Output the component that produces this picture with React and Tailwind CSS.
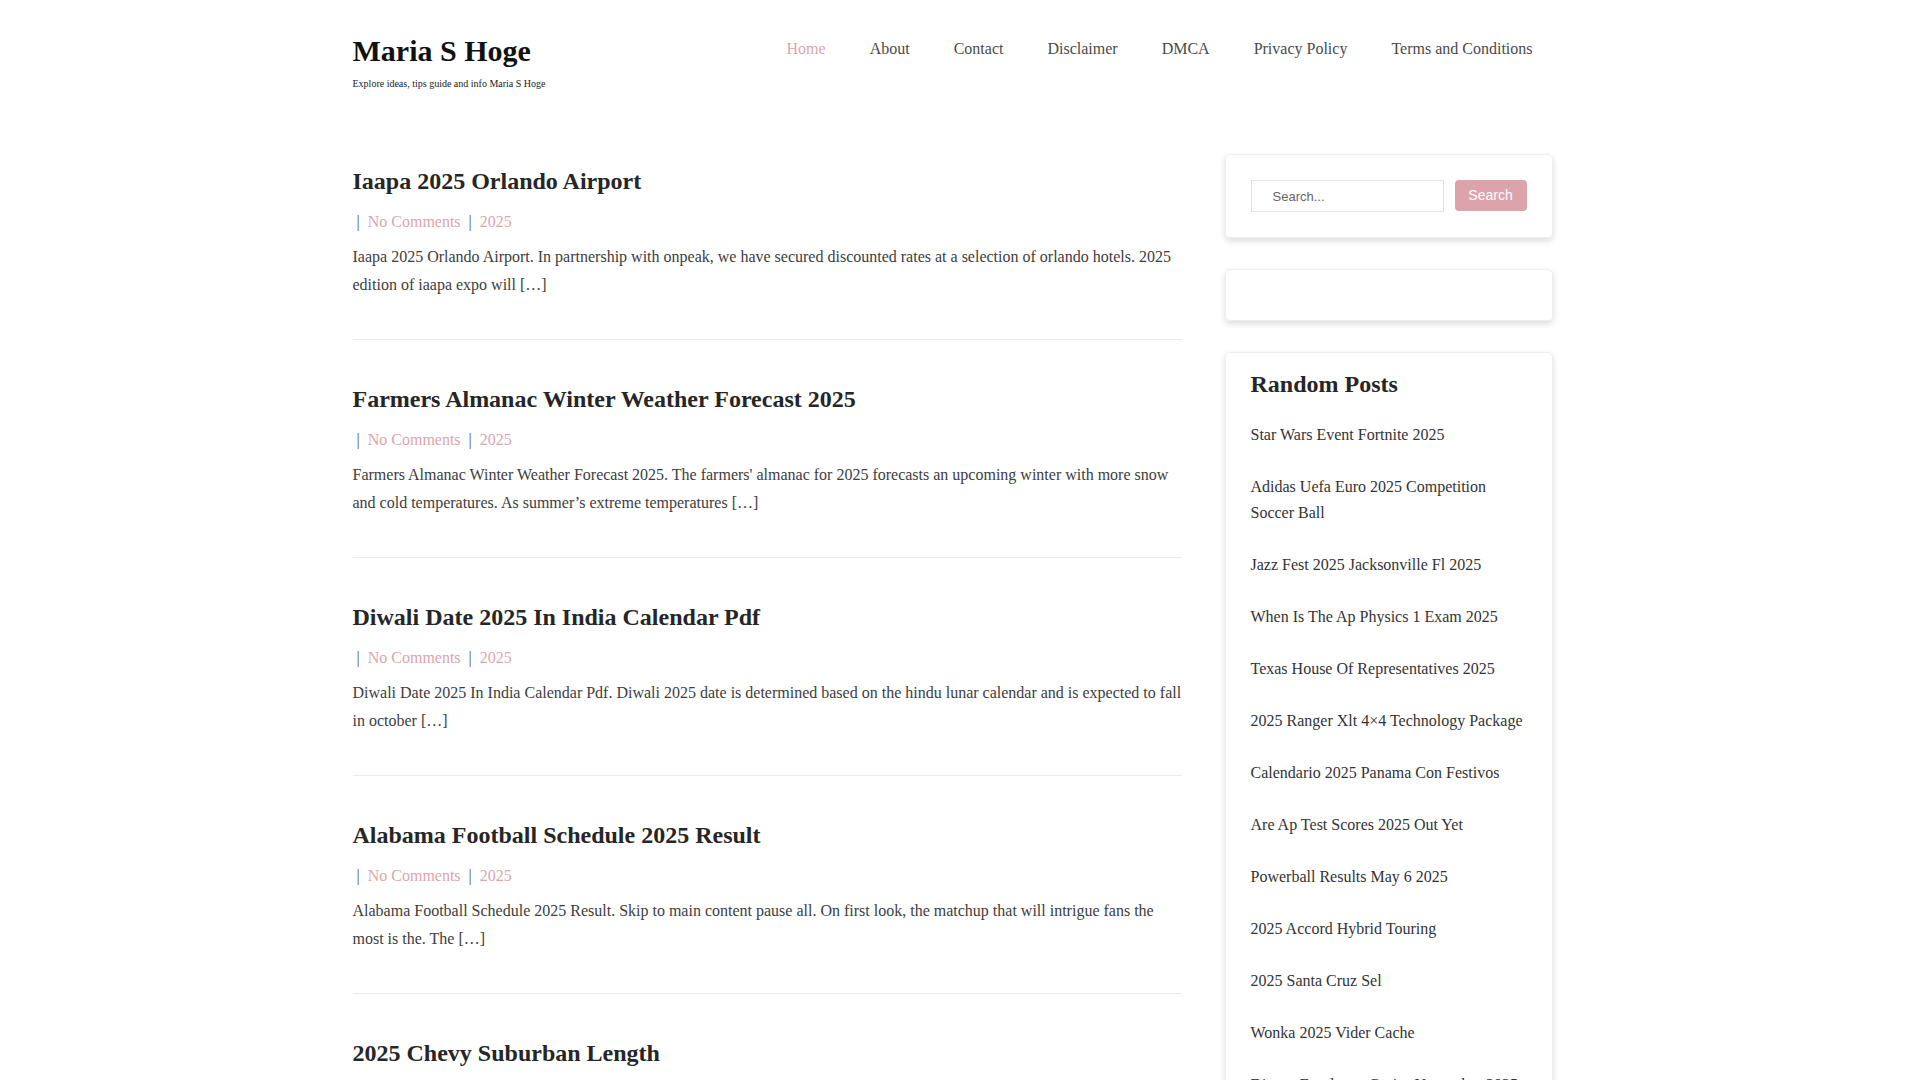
import React from "react";

const navItems = ["Home", "About", "Contact", "Disclaimer", "DMCA", "Privacy Policy", "Terms and Conditions"];

const posts = [
  {
    title: "Iaapa 2025 Orlando Airport",
    excerpt:
      "Iaapa 2025 Orlando Airport. In partnership with onpeak, we have secured discounted rates at a selection of orlando hotels. 2025 edition of iaapa expo will […]",
  },
  {
    title: "Farmers Almanac Winter Weather Forecast 2025",
    excerpt:
      "Farmers Almanac Winter Weather Forecast 2025. The farmers' almanac for 2025 forecasts an upcoming winter with more snow and cold temperatures. As summer’s extreme temperatures […]",
  },
  {
    title: "Diwali Date 2025 In India Calendar Pdf",
    excerpt:
      "Diwali Date 2025 In India Calendar Pdf. Diwali 2025 date is determined based on the hindu lunar calendar and is expected to fall in october […]",
  },
  {
    title: "Alabama Football Schedule 2025 Result",
    excerpt:
      "Alabama Football Schedule 2025 Result. Skip to main content pause all. On first look, the matchup that will intrigue fans the most is the. The […]",
  },
  {
    title: "2025 Chevy Suburban Length",
    excerpt:
      "2025 Chevy Suburban Length. The 2025 chevrolet suburban is one of the longest suvs on the market, offering plenty of room for passengers and cargo alike […]",
  },
];

const randomPosts = [
  "Star Wars Event Fortnite 2025",
  "Adidas Uefa Euro 2025 Competition Soccer Ball",
  "Jazz Fest 2025 Jacksonville Fl 2025",
  "When Is The Ap Physics 1 Exam 2025",
  "Texas House Of Representatives 2025",
  "2025 Ranger Xlt 4×4 Technology Package",
  "Calendario 2025 Panama Con Festivos",
  "Are Ap Test Scores 2025 Out Yet",
  "Powerball Results May 6 2025",
  "2025 Accord Hybrid Touring",
  "2025 Santa Cruz Sel",
  "Wonka 2025 Vider Cache",
  "Disney Employee Cruise November 2025",
];

export default function App() {
  return (
    <div className="min-h-screen bg-white pr-[15px] font-['Liberation_Serif',_'Times_New_Roman',_serif] text-[16px] text-[#333]">
      <div className="mx-auto w-[1200px]">
        <header className="flex h-[154px] items-start justify-between">
          <div className="pt-[33px]">
            <a href="#" className="block text-[30px] font-bold leading-[36px] text-[#111]">
              Maria S Hoge
            </a>
            <p className="mt-[7px] text-[10px] leading-[15px] text-[#222]">
              Explore ideas, tips guide and info Maria S Hoge
            </p>
          </div>
          <nav className="flex pt-[37px]">
            {navItems.map((item, i) => (
              <a
                key={item}
                href="#"
                className={
                  "px-[22px] text-[16px] leading-[24px] " +
                  (i === 0 ? "text-[#e0a4ae]" : "text-[#4a4a4a]") +
                  (i === navItems.length - 1 ? " pr-[20px]" : "")
                }
              >
                {item}
              </a>
            ))}
          </nav>
        </header>

        <div className="flex items-start justify-between">
          <main className="w-[829px] pt-[13px]">
            {posts.map((post, i) => (
              <article
                key={post.title}
                className={"border-b border-[#ececec] pb-[40px] " + (i === 0 ? "" : "pt-[45px]")}
              >
                <h2 className="text-[24px] font-bold leading-[29px] text-[#262626]">
                  <a href="#">{post.title}</a>
                </h2>
                <div className="mt-[12px] text-[16px] leading-[28px] text-[#555]">
                  <span className="ml-[4px] mr-[8px]">|</span>
                  <a href="#" className="text-[#e0a4ae]">No Comments</a>
                  <span className="mx-[8px]">|</span>
                  <a href="#" className="text-[#e0a4ae]">2025</a>
                </div>
                <p className="mt-[7px] text-[16px] leading-[28px] text-[#3d3d3d]">{post.excerpt}</p>
              </article>
            ))}
          </main>

          <aside className="w-[328px]">
            <div className="mb-[31px] rounded-[5px] border border-[#eeeeee] p-[25px] shadow-[0_3px_6px_rgba(0,0,0,0.14)]">
              <form className="flex items-start gap-[11px]" onSubmit={(e) => e.preventDefault()}>
                <input
                  type="text"
                  placeholder="Search..."
                  className="h-[32px] w-[193px] border border-[#e3e3e3] px-[21px] font-['Liberation_Sans',_Arial,_sans-serif] text-[13px] text-[#555] placeholder:text-[#666] outline-none"
                />
                <button
                  type="submit"
                  className="h-[31px] w-[72px] rounded-[4px] bg-[#dca3ad] font-['Liberation_Sans',_Arial,_sans-serif] text-[14px] text-white"
                >
                  Search
                </button>
              </form>
            </div>

            <div className="mb-[31px] h-[52px] rounded-[5px] border border-[#eeeeee] p-[25px] shadow-[0_3px_6px_rgba(0,0,0,0.14)]" />

            <div className="rounded-[5px] border border-[#eeeeee] px-[25px] pb-[25px] pt-[17px] shadow-[0_3px_6px_rgba(0,0,0,0.14)]">
              <h3 className="mb-[10px] text-[24px] font-bold leading-[29px] text-[#262626]">Random Posts</h3>
              <ul>
                {randomPosts.map((p) => (
                  <li key={p} className="py-[13px] text-[16px] leading-[26px] text-[#333]">
                    <a href="#">{p}</a>
                  </li>
                ))}
              </ul>
            </div>
          </aside>
        </div>
        <div className="h-[40px]" />
      </div>
    </div>
  );
}
